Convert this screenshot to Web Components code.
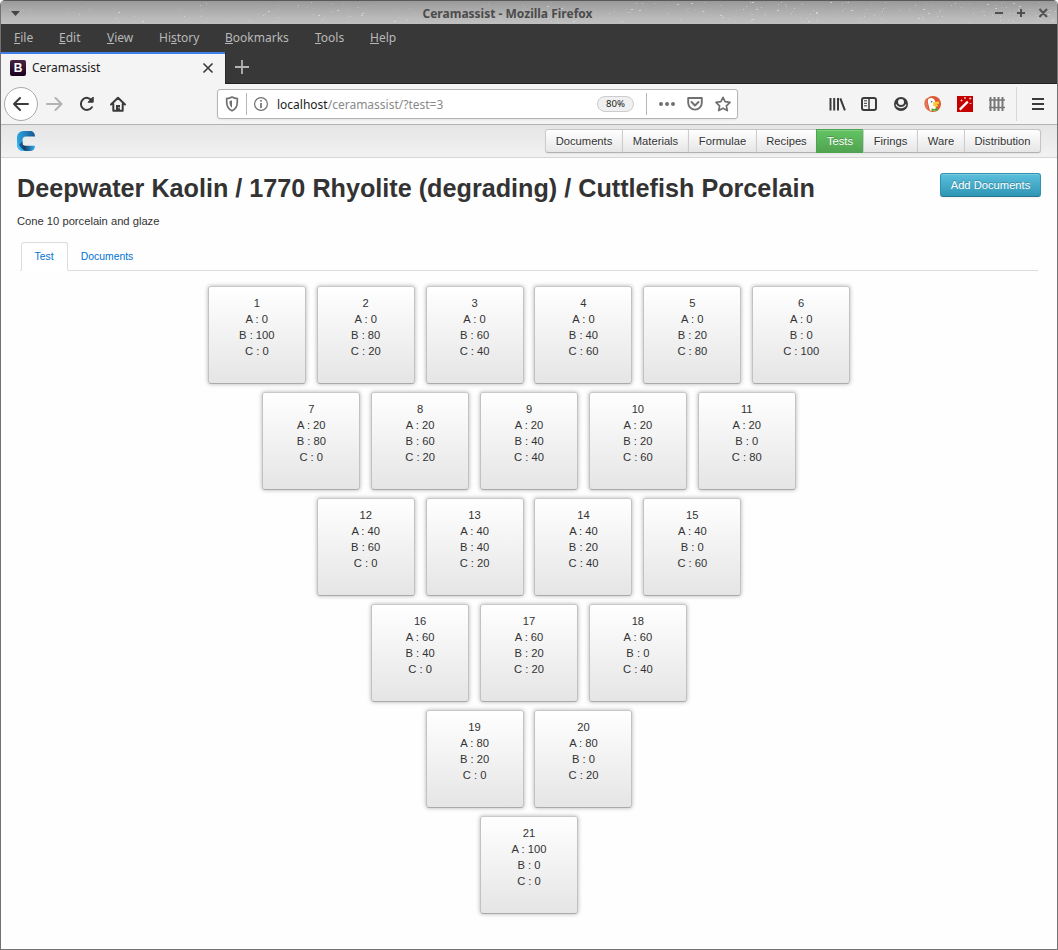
<!DOCTYPE html>
<html lang="en">
<head>
<meta charset="utf-8">
<title>Ceramassist</title>
<style>
html,body{margin:0;height:100%;background:#fff}
body{font-family:"Liberation Sans",Arial,sans-serif;overflow:hidden}
</style>
</head>
<body>
<app-window></app-window>
<script>
function define(name, html, setup) {
  customElements.define(name, class extends HTMLElement {
    constructor() {
      super();
      this.attachShadow({mode: 'open'});
    }
    connectedCallback() {
      this.shadowRoot.innerHTML = html;
      if (setup) setup(this, this.shadowRoot);
    }
  });
}

define('title-bar', `
<style>
:host{display:grid;grid-template-columns:40px 1fr 83px;align-items:center;height:24px;box-sizing:border-box;border-top:1px solid #5b595b;background:linear-gradient(#999 0,#a5a5a5 25%,#bababa 75%,#c0c0c0);position:relative;overflow:hidden}
.name{font:bold 12px/22px "Noto Sans",sans-serif;color:#4b4b4b;text-align:center;padding-top:2px;z-index:1}
svg{display:block}
.menu{margin-left:10px;z-index:1}
.btns{z-index:1}
#stars{position:absolute;left:0;top:0}
</style>
<svg id="stars" width="1056" height="23"></svg>
<svg class="menu" width="10" height="8"><path d="M0 2h9l-4.500 5z" fill="#454545"/></svg>
<div class="name">Ceramassist - Mozilla Firefox</div>
<svg class="btns" width="83" height="22" fill="none" stroke="#505050" stroke-width="2"><path d="M21 11h8M43 11h8M47 7v8M65.500 7l7.500 8M73 7l-7.500 8"/></svg>
`, (el, root) => {
  // Deterministic speckle, denser toward the right-hand end of the bar.
  let s = 71, out = '';
  const rnd = () => (s = (s * 16807) % 2147483647) / 2147483647;
  for (let i = 0; i < 300; i++) {
    const x = Math.pow(rnd(), 0.65) * 1056, y = rnd() * 21 + 1, b = rnd();
    out += `<rect x="${x | 0}" y="${y | 0}" width="${b > .85 ? 2 : 1}" height="1" fill="${b > .5 ? '#dfe5ec' : '#d2cfcc'}" opacity="${(.2 + b * .5).toFixed(2)}"/>`;
  }
  root.querySelector('#stars').innerHTML = out;
});

define('menu-bar', `
<style>
:host{display:flex;height:28px;background:#383838;color:#b8b8b8;font:12px/27px "Noto Sans",sans-serif;padding-left:13px;box-sizing:border-box}
span{display:block;white-space:nowrap}
u{text-decoration:underline 1px;text-underline-offset:1px;text-decoration-skip-ink:none}
</style>
<span style="width:45px"><u>F</u>ile</span><span style="width:48px"><u>E</u>dit</span><span style="width:52px"><u>V</u>iew</span><span style="width:66px">Hi<u>s</u>tory</span><span style="width:90px"><u>B</u>ookmarks</span><span style="width:55px"><u>T</u>ools</span><span><u>H</u>elp</span>
`);

define('tab-strip', `
<style>
:host{display:flex;height:32px;background:#383838}
.tab{display:flex;align-items:center;width:224px;height:32px;box-sizing:border-box;border-top:2px solid #3d80e9;background:#f4f4f4;padding:0 0 2px 9px;color:#202020;font:12px/28px "Noto Sans",sans-serif;flex:none}
.tab span{flex:1;margin-left:6px}
svg{display:block}
.rest{flex:1;border-bottom:1px solid #222;border-left:1px solid #292929}
</style>
<div class="tab">
<svg width="16" height="16"><defs><linearGradient id="f" x2="0" y2="1"><stop stop-color="#482342"/><stop offset="1" stop-color="#19031f"/></linearGradient></defs><rect width="16" height="16" rx="2" fill="url(#f)"/><text x="8" y="12" text-anchor="middle" font-family="Liberation Sans" font-weight="700" font-size="12" fill="#fff">B</text></svg>
<span>Ceramassist</span>
<svg width="24" height="16" fill="none" stroke="#383838" stroke-width="1.600"><path d="M2.500 3.500l9 9M11.500 3.500l-9 9"/></svg>
</div>
<div class="rest"><svg width="34" height="30" fill="none" stroke="#b5b5b5" stroke-width="1.800"><path d="M9 15h14M16 8v14"/></svg></div>
`);

define('url-bar', `
<style>
:host{display:flex;align-items:center;width:521px;height:30px;box-sizing:border-box;border:1px solid #b4b4b4;border-radius:3px;background:#fff;box-shadow:0 1px 2px #0001;font:12px/20px "Noto Sans",sans-serif;color:#8a8a8a}
svg{display:block}
b{font-weight:400;color:#1c1c1c}
.t{flex:1;margin-left:8px;padding-top:1px}
.z{font-size:9.600px;line-height:14px;color:#222;border:1px solid #ccc;border-radius:8px;background:#f0f0f0;width:35px;text-align:center;margin-right:12px}
.s{width:1px;height:22px;background:#b8b8b8}
</style>
<svg width="28" height="28" fill="none"><path d="M8.700 8.600C11 8.500 12.500 7.900 14 7.100c1.500.8 3 1.400 5.300 1.500v3.600c0 4-2 7-5.300 8.500-3.300-1.500-5.300-4.500-5.300-8.500z" stroke="#707070" stroke-width="1.700"/><path d="M14 10.200v7.500c-1.600-1.200-2.500-3-2.500-5.200V11c1 0 1.700-.3 2.500-.8z" fill="#707070"/></svg>
<div class="s"></div>
<svg width="22" height="28" fill="none" stroke="#707070"><circle cx="14" cy="14" r="6.400" stroke-width="1.200"/><path d="M14 13v5M14 10v1.600" stroke-width="1.700"/></svg>
<div class="t"><b>localhost</b>/ceramassist/?test=3</div>
<div class="z">80%</div><div class="s"></div>
<svg width="90" height="28" fill="none"><g fill="#707070"><circle cx="14" cy="14" r="2"/><circle cx="20" cy="14" r="2"/><circle cx="26" cy="14" r="2"/></g><path d="M41.200 8h13.600v4.800a6.800 6.800 0 0 1-13.600 0zM44.500 12l3.500 3.500 3.500-3.500" stroke="#707070" stroke-width="1.900" stroke-linecap="round" stroke-linejoin="round"/><path d="M76 7.300l2.100 4.400 4.900.7-3.600 3.400.9 4.800-4.300-2.300-4.300 2.300.9-4.800-3.600-3.400 4.900-.7z" stroke="#707070" stroke-width="1.700" stroke-linejoin="round"/></svg>
`);

define('nav-toolbar', `
<style>
:host{display:flex;align-items:center;height:41px;box-sizing:border-box;background:#f4f4f4;border-bottom:1px solid #b3b3b3}
svg{display:block}
.l{width:216px;flex:none}
.r{margin-left:auto;flex:none}
</style>
<svg class="l" width="216" height="40" fill="none" stroke="#3b3b3b" stroke-width="2" stroke-linecap="round" stroke-linejoin="round">
<circle cx="20" cy="20" r="16.500" fill="#fff" stroke="#aaa" stroke-width="1"/>
<path d="M27 20H13M19 14L13 20l6 6"/>
<path d="M46 20h14.500M54.500 14l6 6-6 6" stroke="#b2b2b2"/>
<path d="M90.800 16.400a6 6 0 1 0 .1 6.800"/><path d="M92.200 13v5.200h-5.200z" stroke-linecap="butt" fill="#3b3b3b" stroke-width="1"/>
<path d="M110 20.500l7-6.800 7 6.800M112.300 20v6.800h9.400V20"/><path d="M115 21h4v6h-4z" fill="#3b3b3b" stroke="none"/><path d="M117.500 23.800h.8" stroke="#fff" stroke-width=".8"/>
</svg>
<url-bar></url-bar>
<svg class="r" width="237" height="40" fill="none" stroke="#3b3b3b" stroke-width="2">
<path d="M11 14v12.500M14.700 14v12.500M18.500 14v12.500M20.800 14.300l4.600 12" transform="translate(-.5)"/>
<rect x="42" y="14" width="14" height="12" rx="2"/><path d="M49 14v12" stroke-width="1.500"/><path d="M44 16.800h3M44 19.300h3M44 21.800h3" stroke-width="1"/>
<circle cx="81" cy="20" r="7" fill="#3b3b3b" stroke="none"/><circle cx="81" cy="18" r="3" fill="#f4f4f4" stroke="none"/><path d="M76 20.600c.9 2.200 2.800 3 5 3s4.100-.8 5-3" stroke="#f4f4f4" stroke-width="1.200"/>
<g stroke="none"><circle cx="113" cy="20" r="8" fill="#de5833"/><path d="M108.600 14.800c2.500-1.900 6-.5 6.500 2.400l.9 8.800c-1.700 1-4.400 1.200-6.100.6l-1.800-7.500c-.4-1.700-.4-3.300.5-4.300z" fill="#fff"/><path d="M106.500 14a8 8 0 0 0 2 12.500l-1-7z" fill="#e57355"/><path d="M113.300 18l6 -.6-.5 2.300-2.300 1.300 2 .3-1.500 1.500-4-.8z" fill="#fc3"/><path d="M111.500 24.200l2.500.8 3.500-1.300.3 3.200-3-.6-3.300 1.100z" fill="#4dac2e"/><circle cx="111.600" cy="17.700" r=".8" fill="#2d4f8e"/>
<rect x="137" y="12" width="16" height="16" fill="#c40000"/></g>
<path d="M139.800 25.600l8-8" stroke="#fff" stroke-width="2.200"/><path d="M140.500 16.500h2M141.500 15.500v2M144 14h2M145 13v2M149 14.500h2.400M150.200 13.300v2.400M149.500 19.500h2" stroke="#fff" stroke-width=".8" opacity=".8"/>
<path d="M170.500 13v14M174.500 13v14M178.500 13v14M182.500 13v14" stroke="#777" stroke-width="2"/><path d="M169 16h16M169 23.500h16" stroke="#777" stroke-width="1.300"/>
<path d="M196.500 3v34" stroke="#d9d9d9" stroke-width="1"/>
<path d="M212 15h12M212 20h12M212 25h12"/>
</svg>
`);

define('nav-item', `
<style>
:host{display:block;box-sizing:border-box;height:24px;border:1px solid #c5c5c5;border-bottom-color:#b0b0b0;border-left-color:#ccc;margin-left:-1px;background:linear-gradient(#fff,#e6e6e6);color:#333;font:11.200px/22px "Liberation Sans",Arial,sans-serif;text-align:center;text-shadow:0 1px 1px #ffffffbf;box-shadow:inset 0 1px 0 #fff3,0 1px 2px #0000000d}
:host([first]){border-radius:3px 0 0 3px}
:host([last]){border-radius:0 3px 3px 0}
:host([active]){background:linear-gradient(#62c462,#51a351);color:#fff;border-color:#4fa24f;text-shadow:0 -1px 0 #00000040}
</style><slot></slot>`);

define('app-nav', `
<style>
:host{display:flex;align-items:flex-start;height:33px;box-sizing:border-box;background:linear-gradient(#e5e5e5,#f2f2f2);border-bottom:1px solid #d6d6d6;padding:4px 16px 0 15px}
.logo{margin-top:2px;flex:1}
.logo svg{display:block}
nav{display:flex}
</style>
<div class="logo"><svg width="20" height="20"><defs><linearGradient id="a" x1="0" x2="1"><stop stop-color="#2ba6e4"/><stop offset="1" stop-color="#17568f"/></linearGradient><linearGradient id="b" x1="0" x2="1"><stop stop-color="#1f6fae"/><stop offset=".4" stop-color="#173d69"/><stop offset="1" stop-color="#2fb2f5"/></linearGradient></defs>
<path d="M1 7C1 3 3.500 0 7.500 0H14c3 0 5 2 5 5.500H10C7.500 5.500 6.500 7 6.500 9v4L2.500 16.500C1.500 15.500 1 14.500 1 13z" fill="url(#a)"/><path d="M6.500 10.500v1.500c0 1.800 1 2.700 3 2.700H19c0 3.500-2 5.300-5 5.300H8C4.500 20 2.500 18 1.500 15z" fill="url(#b)"/><path d="M1 9v4.500C1 17.500 3.500 20 7.500 20h2C6 18.500 3.200 15.500 1 9z" fill="#35b8fa"/></svg></div>
<nav>
<nav-item first style="width:78px">Documents</nav-item><nav-item style="width:67px">Materials</nav-item><nav-item style="width:69px">Formulae</nav-item><nav-item style="width:61px">Recipes</nav-item><nav-item active style="width:48px">Tests</nav-item><nav-item style="width:55px">Firings</nav-item><nav-item style="width:48px">Ware</nav-item><nav-item last style="width:77px">Distribution</nav-item>
</nav>`);

define('page-header', `
<style>
:host{display:flex;justify-content:space-between;align-items:flex-start;padding:15px 16px 0;height:70px;box-sizing:border-box;color:#333}
h1{margin:-1px 0 0;font:bold 25.200px/32px "Liberation Sans",Arial,sans-serif;white-space:nowrap}
p{margin:9px 0 0;font-size:11.200px;line-height:16px}
button{box-sizing:border-box;width:101px;height:24px;padding:0;border:1px solid #3292ae;border-bottom-color:#25758c;border-radius:3px;background:linear-gradient(#5bc0de,#2f96b4);color:#fff;font:11.200px/22px "Liberation Sans",Arial,sans-serif;text-shadow:0 -1px 0 #00000040;box-shadow:inset 0 1px 0 #fff3,0 1px 2px #0000000d}
</style>
<div><h1><slot name="title"></slot></h1><p><slot name="note"></slot></p></div>
<button>Add Documents</button>`);

define('page-tabs', `
<style>
:host{display:flex;height:29px;box-sizing:border-box;margin:14px 19px 0;border-bottom:1px solid #ddd;font-size:10.400px;line-height:27px;color:#0073d5}
div{height:29px;box-sizing:border-box;border:1px solid transparent;text-align:center}
.on{width:47px;border-color:#ddd #ddd #fff;border-radius:3px 3px 0 0;background:#fff;margin-left:1px;padding-right:1px}
.off{width:78px}
</style>
<div class="on">Test</div><div class="off">Documents</div>`);

define('blend-card', `
<style>
:host{display:block;box-sizing:border-box;width:98px;height:98px;padding-top:8px;border:1px solid #ccc;border-color:#c9c9c9 #c2c2c2 #aaa;border-radius:3px;background:linear-gradient(#fff,#e5e5e5);box-shadow:0 0 4px #0000004d;text-align:center;font-size:11.200px;line-height:16px;color:#333}
</style>
<slot></slot><div id="a"></div><div id="b"></div><div id="c"></div>`,
(el, root) => { for (const k of 'abc') root.getElementById(k).textContent = k.toUpperCase() + ' : ' + el.getAttribute(k); });

define('blend-triangle', `
<style>
:host{display:flex;flex-direction:column;align-items:center;gap:8px;padding-top:15px}
.row{display:flex;gap:10.880px}
</style>`, (el, root) => {
  // Triaxial blend in 20% steps: A is constant along a row, C rises to the right.
  let n = 1;
  for (let r = 0; r < 6; r++) {
    const row = document.createElement('div');
    row.className = 'row';
    for (let i = 0; i < 6 - r; i++) {
      const card = document.createElement('blend-card');
      card.setAttribute('a', r * 20);
      card.setAttribute('b', 100 - r * 20 - i * 20);
      card.setAttribute('c', i * 20);
      card.textContent = n++;
      row.append(card);
    }
    root.append(row);
  }
});

define('app-window', `
<style>
:host{display:block;width:1058px;height:950px;box-sizing:border-box;border:solid #737173;border-width:0 1px 1px;background:#fefefe;border-radius:5px 5px 0 0;overflow:hidden}
</style>
<title-bar></title-bar><menu-bar></menu-bar><tab-strip></tab-strip><nav-toolbar></nav-toolbar><app-nav></app-nav>
<page-header><span slot="title">Deepwater Kaolin / 1770 Rhyolite (degrading) / Cuttlefish Porcelain</span><span slot="note">Cone 10 porcelain and glaze</span></page-header>
<page-tabs></page-tabs>
<blend-triangle></blend-triangle>`);
</script>
</body>
</html>
